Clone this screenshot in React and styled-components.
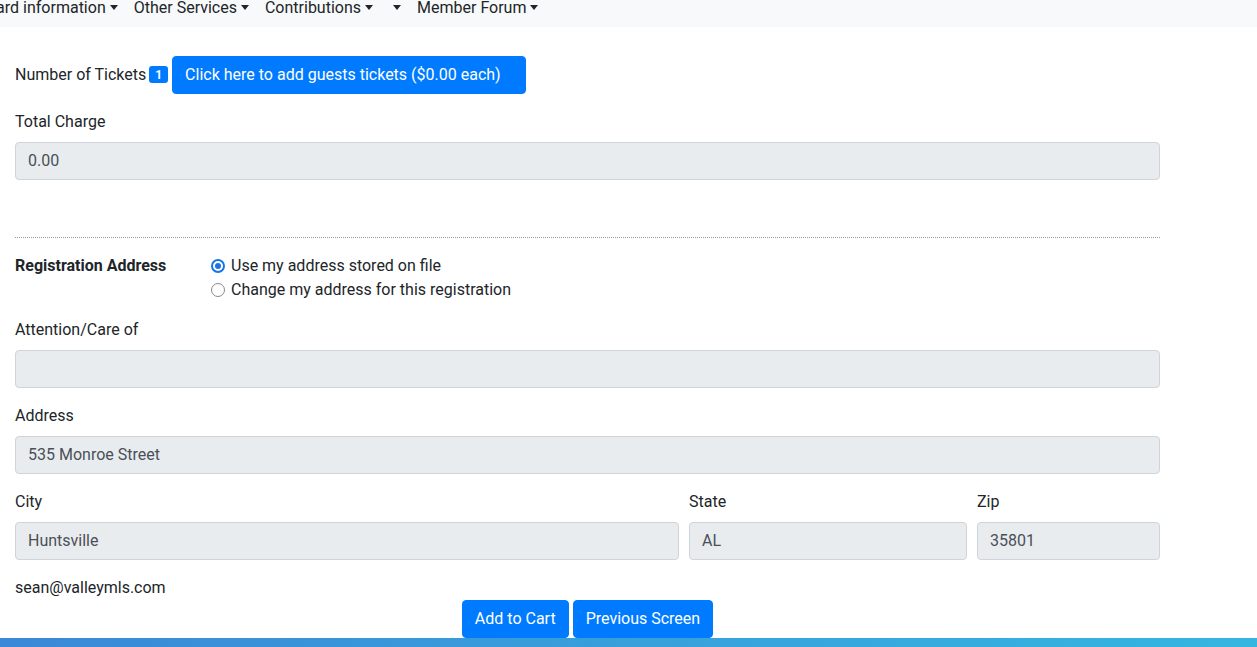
import React from 'react';
import styled, { createGlobalStyle } from 'styled-components';

const GlobalStyle = createGlobalStyle`
  html, body {
    margin: 0;
    padding: 0;
    background: #ffffff;
    overflow: hidden;
  }
  body {
    font-family: Roboto, "Liberation Sans", Arial, sans-serif;
    font-size: 16px;
    line-height: 1.5;
    color: #212529;
  }
`;

const Nav = styled.nav`
  background: #f8f9fa;
  height: 27px;
  display: flex;
  overflow: hidden;
`;

const NavList = styled.ul`
  display: flex;
  list-style: none;
  margin: 0 0 0 -31px;
  padding: 0;
`;

const NavItem = styled.li`
  padding: 0 8px;
  line-height: 16px;
  color: #212529;
  white-space: nowrap;
  &::after {
    content: '';
    display: inline-block;
    margin-left: 4px;
    vertical-align: 3px;
    border-top: 5px solid #212529;
    border-left: 4px solid transparent;
    border-right: 4px solid transparent;
  }
`;

const Content = styled.main`
  padding: 29px 15px 0 15px;
  width: 1145px;
`;

const TicketRow = styled.div`
  display: flex;
  align-items: center;
  margin-bottom: 16px;
`;

const Label = styled.label`
  display: block;
  margin-bottom: 8px;
`;

const Badge = styled.span`
  display: inline-block;
  background: #007bff;
  color: #fff;
  font-size: 12px;
  font-weight: 700;
  line-height: 1;
  padding: 3px 6px 2px;
  border-radius: 3px;
  margin: -2px 4px 0 3px;
`;

const Button = styled.button`
  font-family: inherit;
  font-size: 16px;
  line-height: 24px;
  color: #fff;
  background: #007bff;
  border: 1px solid #007bff;
  border-radius: 4px;
  padding: 6px ${p => (p.wide ? '24px' : '12px')} 6px 12px;
  cursor: pointer;
`;

const Input = styled.div`
  box-sizing: border-box;
  height: 38px;
  padding: 6px 12px;
  background: #e9ecef;
  border: 1px solid #ced4da;
  border-radius: 4px;
  color: #495057;
`;

const Group = styled.div`
  margin-bottom: 16px;
`;

const Divider = styled.hr`
  border: 0;
  border-top: 1px dotted #9a9a9a;
  margin: 57px 0 16px 0;
`;

const AddressRow = styled.div`
  display: flex;
  margin-bottom: 16px;
`;

const AddressLabel = styled.div`
  width: 196px;
  font-weight: 700;
`;

const RadioList = styled.div`
  display: flex;
  flex-direction: column;
`;

const RadioOption = styled.label`
  display: flex;
  align-items: center;
  gap: 6px;
`;

const RadioDot = styled.span`
  box-sizing: border-box;
  width: 14px;
  height: 14px;
  border-radius: 50%;
  border: ${p => (p.checked ? '2px solid #1a73e8' : '1.5px solid #8a8a8e')};
  display: flex;
  align-items: center;
  justify-content: center;
  &::after {
    content: '';
    width: 6px;
    height: 6px;
    border-radius: 50%;
    background: ${p => (p.checked ? '#1a73e8' : 'transparent')};
  }
`;

const CityRow = styled.div`
  display: grid;
  grid-template-columns: 664px 278px 183px;
  column-gap: 10px;
  margin-bottom: 16px;
`;

const Email = styled.div`
  line-height: 24px;
`;

const Actions = styled.div`
  display: flex;
  justify-content: center;
  gap: 4px;
`;

const Footer = styled.footer`
  height: 30px;
  background: linear-gradient(100deg, #3a88d7 0%, #38a2dc 55%, #34b6e0 100%);
`;

const navItems = ['Board information', 'Other Services', 'Contributions', '', 'Member Forum'];

export default function App() {
  return (
    <>
      <GlobalStyle />
      <Nav>
        <NavList>
          {navItems.map((n, i) => (
            <NavItem key={i}>{n}</NavItem>
          ))}
        </NavList>
      </Nav>
      <Content>
        <TicketRow>
          Number of Tickets
          <Badge>1</Badge>
          <Button wide>Click here to add guests tickets ($0.00 each)</Button>
        </TicketRow>
        <Group>
          <Label>Total Charge</Label>
          <Input>0.00</Input>
        </Group>
        <Divider />
        <AddressRow>
          <AddressLabel>Registration Address</AddressLabel>
          <RadioList>
            <RadioOption>
              <RadioDot checked />
              Use my address stored on file
            </RadioOption>
            <RadioOption>
              <RadioDot />
              Change my address for this registration
            </RadioOption>
          </RadioList>
        </AddressRow>
        <Group>
          <Label>Attention/Care of</Label>
          <Input />
        </Group>
        <Group>
          <Label>Address</Label>
          <Input>535 Monroe Street</Input>
        </Group>
        <CityRow>
          <div>
            <Label>City</Label>
            <Input>Huntsville</Input>
          </div>
          <div>
            <Label>State</Label>
            <Input>AL</Input>
          </div>
          <div>
            <Label>Zip</Label>
            <Input>35801</Input>
          </div>
        </CityRow>
        <Email>sean@valleymls.com</Email>
        <Actions>
          <Button>Add to Cart</Button>
          <Button>Previous Screen</Button>
        </Actions>
      </Content>
      <Footer />
    </>
  );
}
